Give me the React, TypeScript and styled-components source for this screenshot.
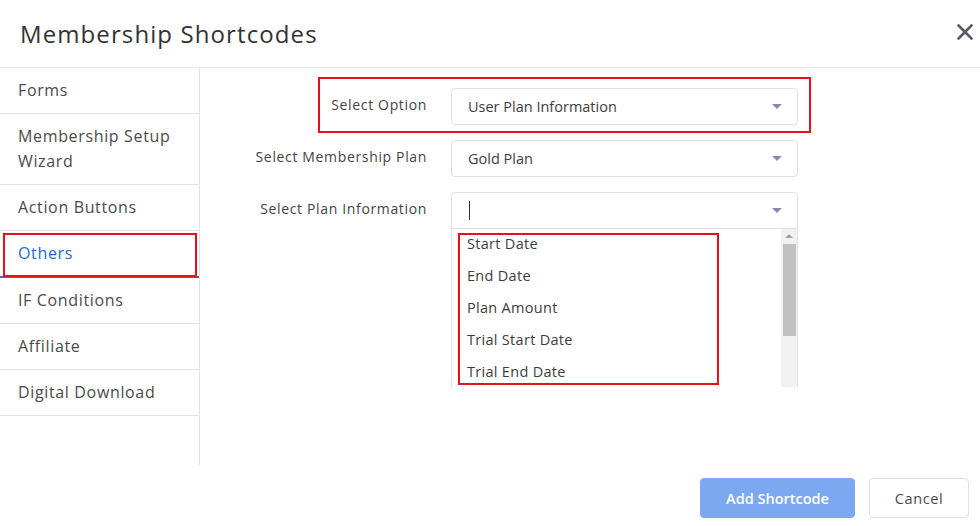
import React from "react";
import styled, { createGlobalStyle } from "styled-components";

const GlobalStyle = createGlobalStyle`
  html, body { margin: 0; padding: 0; background: #fff; }
  body { font-family: "Open Sans", "Liberation Sans", sans-serif; color: #444; }
  * { box-sizing: border-box; }
`;

const Dialog = styled.div`
  width: 980px;
  height: 526px;
  background: #fff;
  display: flex;
  flex-direction: column;
  overflow: hidden;
`;

const Header = styled.div`
  height: 68px;
  flex: 0 0 68px;
  border-bottom: 1px solid #e6e6e6;
  display: flex;
  align-items: center;
  justify-content: space-between;
  padding: 0 5px 0 20px;
`;

const Title = styled.h1`
  margin: 0;
  font-size: 24px;
  font-weight: 400;
  color: #333;
  letter-spacing: 1.1px;
`;

const CloseButton = styled.button`
  border: 0;
  background: transparent;
  padding: 0;
  width: 20px;
  height: 20px;
  display: flex;
  align-items: center;
  justify-content: center;
  color: #555a66;
  cursor: pointer;
  margin-top: -4px;
`;

const Body = styled.div`
  display: flex;
  height: 397px;
  flex: 0 0 397px;
`;

const Sidebar = styled.ul`
  list-style: none;
  margin: 0;
  padding: 0;
  width: 200px;
  border-right: 1px solid #e4e4e4;
`;

const NavItem = styled.li<{ $active?: boolean }>`
  position: relative;
  padding: 10px 18px 10px 18px;
  line-height: 25px;
  font-size: 16px;
  letter-spacing: 0.65px;
  color: ${(p) => (p.$active ? "#1d6ad8" : "#4a4a4a")};
  border-bottom: ${(p) => (p.$active ? "2px solid #2a6fd6" : "1px solid #e4e4e4")};
`;

const NavHighlight = styled.span`
  position: absolute;
  left: 3px;
  right: 2px;
  top: 2px;
  bottom: -1px;
  border: 2px solid #e3121b;
  pointer-events: none;
`;

const Main = styled.div`
  flex: 1;
  padding-top: 20px;
  display: flex;
  flex-direction: column;
`;

const Row = styled.div<{ $top?: boolean }>`
  position: relative;
  display: grid;
  grid-template-columns: 227px 347px;
  column-gap: 24px;
  align-items: ${(p) => (p.$top ? "start" : "center")};
  margin-bottom: 15px;
`;

const Label = styled.label<{ $top?: boolean }>`
  text-align: right;
  font-size: 14px;
  letter-spacing: 0.65px;
  color: #444;
  margin-top: ${(p) => (p.$top ? "7px" : "-4px")};
`;

const RowHighlight = styled.span`
  position: absolute;
  left: 118px;
  width: 493px;
  top: -11px;
  bottom: -8px;
  border: 2px solid #e3121b;
  pointer-events: none;
`;

const Field = styled.div`
  position: relative;
`;

const SelectBox = styled.div<{ $open?: boolean }>`
  height: 37px;
  border: 1px solid #dcdfe6;
  border-radius: ${(p) => (p.$open ? "4px 4px 0 0" : "4px")};
  display: flex;
  align-items: center;
  justify-content: space-between;
  padding: 0 15px 0 16px;
  font-size: 14.5px;
  color: #3d3d3d;
`;

const Caret = styled.span`
  width: 0;
  height: 0;
  border-left: 5px solid transparent;
  border-right: 5px solid transparent;
  border-top: 5px solid #8c89a8;
`;

const TextCursor = styled.span`
  display: block;
  width: 1px;
  height: 19px;
  background: #333;
  margin-left: 1px;
`;

const Dropdown = styled.div`
  position: relative;
  height: 159px;
  display: flex;
  border-left: 1px solid #e2e2e2;
  border-right: 1px solid #e2e2e2;
  margin-top: -1px;
  border-top: 1px solid #e2e2e2;
`;

const OptionList = styled.ul`
  list-style: none;
  margin: 0;
  padding: 0;
  flex: 1;
`;

const OptionItem = styled.li`
  height: 32px;
  line-height: 32px;
  padding-left: 15px;
  font-size: 14.5px;
  letter-spacing: 0.3px;
  color: #3d3d3d;
  margin-top: -1px;
  margin-bottom: 1px;
`;

const ListHighlight = styled.span`
  position: absolute;
  left: 6px;
  width: 261px;
  top: 4px;
  height: 152px;
  border: 2px solid #e3121b;
  pointer-events: none;
`;

const Scrollbar = styled.div`
  width: 16px;
  background: #f1f1f1;
  display: flex;
  flex-direction: column;
  align-items: center;
  padding-top: 5px;
`;

const ScrollArrow = styled.span`
  width: 0;
  height: 0;
  border-left: 4px solid transparent;
  border-right: 4px solid transparent;
  border-bottom: 4px solid #a3a3a3;
`;

const ScrollThumb = styled.div`
  margin-top: 6px;
  width: 13px;
  height: 92px;
  background: #c1c1c1;
`;

const Footer = styled.div`
  flex: 1;
  display: flex;
  justify-content: flex-end;
  align-items: flex-start;
  padding: 13px 11px 0 0;
  gap: 14px;
`;

const Button = styled.button<{ $primary?: boolean }>`
  height: 40px;
  border-radius: 4px;
  font-family: inherit;
  font-size: 14.5px;
  letter-spacing: ${(p) => (p.$primary ? "0" : "0.6px")};
  font-weight: ${(p) => (p.$primary ? 600 : 400)};
  background: ${(p) => (p.$primary ? "#7ba8f1" : "#fff")};
  color: ${(p) => (p.$primary ? "#fff" : "#4a4a4a")};
  border: 1px solid ${(p) => (p.$primary ? "#7ba8f1" : "#dcdfe6")};
  width: ${(p) => (p.$primary ? "155px" : "100px")};
  cursor: pointer;
`;

const navItems = [
  "Forms",
  "Membership Setup Wizard",
  "Action Buttons",
  "Others",
  "IF Conditions",
  "Affiliate",
  "Digital Download",
];

const options = ["Start Date", "End Date", "Plan Amount", "Trial Start Date", "Trial End Date"];

export default function App() {
  return (
    <>
      <GlobalStyle />
      <Dialog>
        <Header>
          <Title>Membership Shortcodes</Title>
          <CloseButton aria-label="Close">
            <svg width="18" height="18" viewBox="0 0 18 18">
              <path d="M2.5 2.5 L15.5 15.5 M15.5 2.5 L2.5 15.5" stroke="currentColor" strokeWidth="2.6" strokeLinecap="round" />
            </svg>
          </CloseButton>
        </Header>
        <Body>
          <Sidebar>
            {navItems.map((item) => (
              <NavItem key={item} $active={item === "Others"}>
                {item === "Membership Setup Wizard" ? (
                  <>
                    Membership Setup
                    <br />
                    Wizard
                  </>
                ) : (
                  item
                )}
                {item === "Others" && <NavHighlight />}
              </NavItem>
            ))}
          </Sidebar>
          <Main>
            <Row>
              <RowHighlight />
              <Label>Select Option</Label>
              <SelectBox>
                <span>User Plan Information</span>
                <Caret />
              </SelectBox>
            </Row>
            <Row>
              <Label>Select Membership Plan</Label>
              <SelectBox>
                <span>Gold Plan</span>
                <Caret />
              </SelectBox>
            </Row>
            <Row $top>
              <Label $top>Select Plan Information</Label>
              <Field>
                <SelectBox $open>
                  <TextCursor />
                  <Caret />
                </SelectBox>
                <Dropdown>
                  <OptionList>
                    {options.map((o) => (
                      <OptionItem key={o}>{o}</OptionItem>
                    ))}
                  </OptionList>
                  <Scrollbar>
                    <ScrollArrow />
                    <ScrollThumb />
                  </Scrollbar>
                  <ListHighlight />
                </Dropdown>
              </Field>
            </Row>
          </Main>
        </Body>
        <Footer>
          <Button $primary>Add Shortcode</Button>
          <Button>Cancel</Button>
        </Footer>
      </Dialog>
    </>
  );
}
